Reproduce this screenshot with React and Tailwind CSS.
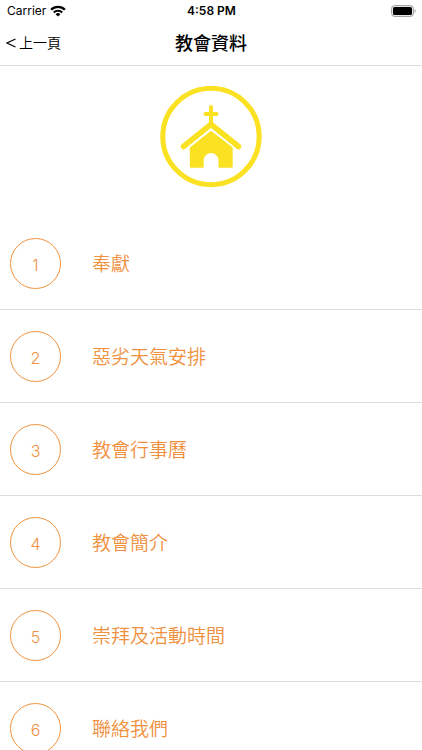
const ITEMS = [
  "奉獻",
  "惡劣天氣安排",
  "教會行事曆",
  "教會簡介",
  "崇拜及活動時間",
  "聯絡我們"
];

function WifiIcon() {
  return (
    <svg width="16" height="12" viewBox="0 0 16 12" aria-hidden="true">
      <path d="M1.1 4.7a9.7 9.7 0 0 1 13.8 0" fill="none" stroke="black" strokeWidth="2.3" />
      <path d="M3.8 7.5a5.9 5.9 0 0 1 8.4 0" fill="none" stroke="black" strokeWidth="2.1" />
      <path d="M8 11.6 5.6 9.2a3.4 3.4 0 0 1 4.8 0Z" />
    </svg>
  );
}

function BatteryIcon() {
  return (
    <svg width="25" height="12" viewBox="0 0 25 12" aria-hidden="true">
      <rect x="0.5" y="0.5" width="22" height="11" rx="3.2" fill="#e5e5e5" stroke="#a3a3a3" />
      <rect x="2" y="2" width="19" height="8" rx="1.6" />
      <path d="M23.6 4v4c.7-.3 1.1-1.1 1.1-2s-.4-1.7-1.1-2Z" fill="#a3a3a3" />
    </svg>
  );
}

function ChurchLogo() {
  return (
    <svg width="102" height="102" viewBox="0 0 102 102" fill="#fae122" role="img" aria-label="教會">
      <circle cx="51" cy="50.5" r="48.2" fill="none" stroke="#fae122" strokeWidth="5" />
      <path d="M51 21v19M45.5 28h11" fill="none" stroke="#fae122" strokeWidth="4" strokeLinecap="round" />
      <path d="M23.5 60.5 51 38.3 78.500 60.500" fill="none" stroke="#fae122" strokeWidth="5.5" strokeLinecap="round" />
      <path d="M51 44.800 72.700 61.500V80.500a1.200 1.200 0 0 1-1.200 1.200H59.500a1 1 0 0 1-1-1V74.500a7.400 7.400 0 0 0-14.800 0v6.200a1 1 0 0 1-1 1H31a1.200 1.200 0 0 1-1.200-1.200V61.500Z" />
    </svg>
  );
}

function MenuItem({ number, label }) {
  return (
    <li className="border-b border-[#dedede]">
      <button type="button" className="flex h-[92px] w-full items-center gap-[31px] px-[10px] text-left text-[#f0913f]">
        <span className="flex size-[51px] shrink-0 items-center justify-center rounded-full border border-[#f0913f] pt-1 text-[16px] font-light">
          {number}
        </span>
        <span className="pt-1 text-[19px] leading-6 font-[350]">{label}</span>
      </button>
    </li>
  );
}

export default function App() {
  return (
    <div className="flex h-dvh flex-col overflow-hidden bg-white font-['Inter','Noto_Sans_CJK_TC',sans-serif] text-black">
      <div className="grid h-[22px] shrink-0 grid-cols-3 items-center pr-[6px] pl-[7px] text-[12px]">
        <span className="flex items-center gap-1">
          Carrier
          <WifiIcon />
        </span>
        <span className="text-center font-semibold">4:58 PM</span>
        <span className="flex justify-end">
          <BatteryIcon />
        </span>
      </div>

      <header className="grid h-11 shrink-0 grid-cols-[1fr_auto_1fr] items-center border-b border-[#dedede] px-[6px]">
        <button type="button" className="flex items-center gap-[2px] pb-0.5 text-left text-[14px] font-[350]">
          <svg width="11" height="10" viewBox="0 0 11 10" fill="none" stroke="black" aria-hidden="true">
            <path d="M9.5 1 1 5l8.5 4" strokeWidth="1.1" />
          </svg>
          上一頁
        </button>
        <h1 className="text-[18px] leading-6 font-medium">教會資料</h1>
      </header>

      <main className="min-h-0 flex-1 overflow-y-auto [scrollbar-width:none]">
        <div className="flex justify-center pt-5 pb-[29px]">
          <ChurchLogo />
        </div>
        <ul>
          {ITEMS.map((label, i) => (
            <MenuItem key={label} number={i + 1} label={label} />
          ))}
        </ul>
      </main>
    </div>
  );
}
